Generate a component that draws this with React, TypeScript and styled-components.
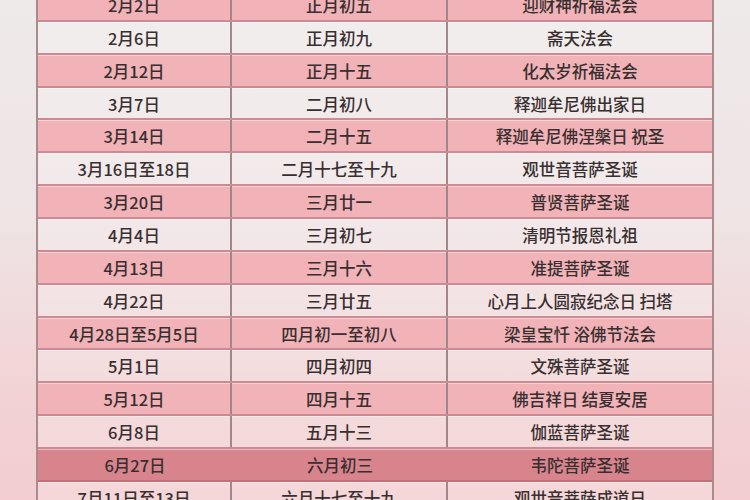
import React from 'react';
import styled, { createGlobalStyle, css } from 'styled-components';

const GlobalStyle = createGlobalStyle`
  html, body {
    margin: 0;
    padding: 0;
  }
  body {
    width: 750px;
    height: 500px;
    overflow: hidden;
    font-family: "Noto Sans CJK SC", "Noto Sans", sans-serif;
  }
`;

const Page = styled.div`
  width: 750px;
  height: 500px;
  overflow: hidden;
  background: linear-gradient(180deg, #eeeaea 0%, #efe3e4 45%, #f2d2d4 80%, #f3cdd0 100%);
  padding-left: 36px;
  box-sizing: border-box;
`;

const Table = styled.div`
  width: 678px;
  margin-top: -11px;
  display: flex;
  flex-direction: column;
  border-left: 2px solid #a98a8d;
  border-right: 2px solid #a98a8d;
  box-sizing: border-box;
`;

type Tone = 'pink' | 'light' | 'mark';

const Row = styled.div<{ $tone: Tone }>`
  display: grid;
  grid-template-columns: 194px 216px 1fr;
  height: 32.86px;
  box-sizing: border-box;
  border-bottom: 2px solid #cd8a92;
  box-shadow: inset 0 1px 0 rgba(255, 255, 255, 0.45);
  ${({ $tone }) =>
    $tone === 'pink'
      ? css`
          background: #f1b3b7;
        `
      : $tone === 'mark'
      ? css`
          background: #d8848c;
          border-bottom-color: #c07077;
        `
      : css`
          background: rgba(255, 255, 255, 0.2);
        `}
`;

const Cell = styled.div<{ $divider: boolean }>`
  display: flex;
  align-items: center;
  justify-content: center;
  font-size: 16.5px;
  font-weight: 500;
  color: #382f30;
  white-space: nowrap;
  padding-top: 1px;
  ${({ $divider }) =>
    $divider &&
    css`
      border-right: 2px solid #a0878a;
    `}
`;

const rows: [string, string, string][] = [
  ['2月2日', '正月初五', '迎财神祈福法会'],
  ['2月6日', '正月初九', '斋天法会'],
  ['2月12日', '正月十五', '化太岁祈福法会'],
  ['3月7日', '二月初八', '释迦牟尼佛出家日'],
  ['3月14日', '二月十五', '释迦牟尼佛涅槃日 祝圣'],
  ['3月16日至18日', '二月十七至十九', '观世音菩萨圣诞'],
  ['3月20日', '三月廿一', '普贤菩萨圣诞'],
  ['4月4日', '三月初七', '清明节报恩礼祖'],
  ['4月13日', '三月十六', '准提菩萨圣诞'],
  ['4月22日', '三月廿五', '心月上人圆寂纪念日 扫塔'],
  ['4月28日至5月5日', '四月初一至初八', '梁皇宝忏 浴佛节法会'],
  ['5月1日', '四月初四', '文殊菩萨圣诞'],
  ['5月12日', '四月十五', '佛吉祥日 结夏安居'],
  ['6月8日', '五月十三', '伽蓝菩萨圣诞'],
  ['6月27日', '六月初三', '韦陀菩萨圣诞'],
  ['7月11日至13日', '六月十七至十九', '观世音菩萨成道日'],
];

const App = () => {
  return (
    <>
      <GlobalStyle />
      <Page>
        <Table>
          {rows.map((r, i) => {
            const tone: Tone = i === 14 ? 'mark' : i % 2 === 0 ? 'pink' : 'light';
            const divided = tone !== 'mark';
            return (
              <Row key={i} $tone={tone}>
                <Cell $divider={divided}>{r[0]}</Cell>
                <Cell $divider={divided}>{r[1]}</Cell>
                <Cell $divider={false}>{r[2]}</Cell>
              </Row>
            );
          })}
        </Table>
      </Page>
    </>
  );
};

export default App;
